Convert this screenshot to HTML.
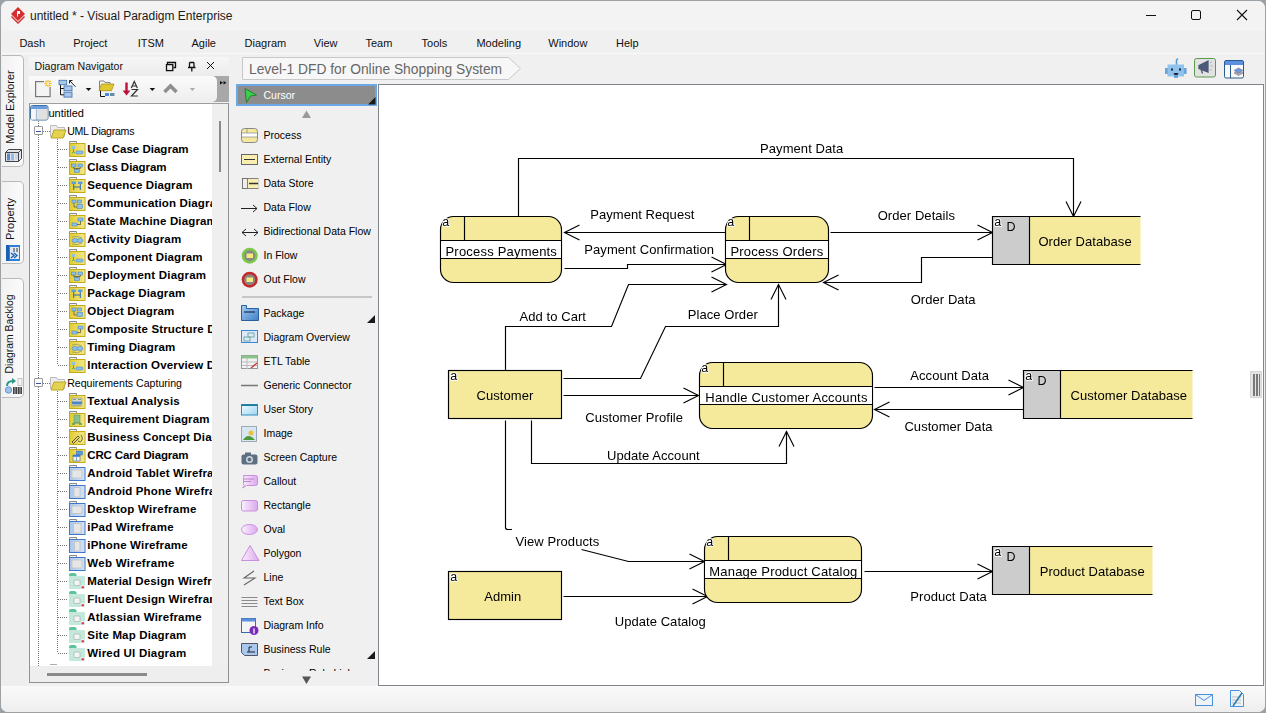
<!DOCTYPE html>
<html><head><meta charset="utf-8">
<style>
*{margin:0;padding:0;box-sizing:border-box}
html,body{width:1266px;height:713px;overflow:hidden;background:#f0f0f0;font-family:"Liberation Sans",sans-serif;color:#000}
.a{position:absolute}
.t{position:absolute;white-space:nowrap;line-height:1}
</style></head><body>

<div class="a" style="left:0;top:0;width:1266px;height:713px;background:#9ca1a6"></div>
<div class="a" style="left:1px;top:1px;width:1264px;height:711px;background:#f0f0f0;border-radius:7px 7px 7px 7px"></div>
<div class="a" style="left:1px;top:1px;width:1264px;height:30px;background:#f3f3f3;border-radius:7px 7px 0 0"></div>
<svg class="a" style="left:8px;top:5px" width="20" height="20" viewBox="0 0 20 20">
<path d="M10 2 L17 9 L10 16 L3 9 Z" fill="#d32f2f"/>
<path d="M4 11 L10 17 L16 11 L17 12 L10 19 L3 12 Z" fill="#d32f2f"/>
<path d="M9 6 h3 v3 h-2 v3 l-1 -1 z" fill="#f3f3f3"/>
</svg>
<div class="t" style="left:30px;top:10px;font-size:12px;color:#1a1a1a">untitled * - Visual Paradigm Enterprise</div>
<div class="a" style="left:1146px;top:15px;width:10px;height:1px;background:#111"></div>
<div class="a" style="left:1191px;top:10px;width:10px;height:10px;border:1px solid #111;border-radius:2px"></div>
<svg class="a" style="left:1236px;top:9px" width="12" height="12"><path d="M1 1 L11 11 M11 1 L1 11" stroke="#111" stroke-width="1.1"/></svg>
<div class="a" style="left:1px;top:53px;width:1264px;height:1px;background:#f8f8f8"></div>
<div class="t" style="left:19.4px;top:38px;font-size:11px;color:#111">Dash</div>
<div class="t" style="left:73.2px;top:38px;font-size:11px;color:#111">Project</div>
<div class="t" style="left:137.7px;top:38px;font-size:11px;color:#111">ITSM</div>
<div class="t" style="left:191.5px;top:38px;font-size:11px;color:#111">Agile</div>
<div class="t" style="left:244.6px;top:38px;font-size:11px;color:#111">Diagram</div>
<div class="t" style="left:313.8px;top:38px;font-size:11px;color:#111">View</div>
<div class="t" style="left:365.5px;top:38px;font-size:11px;color:#111">Team</div>
<div class="t" style="left:421.6px;top:38px;font-size:11px;color:#111">Tools</div>
<div class="t" style="left:476.4px;top:38px;font-size:11px;color:#111">Modeling</div>
<div class="t" style="left:548.3px;top:38px;font-size:11px;color:#111">Window</div>
<div class="t" style="left:616px;top:38px;font-size:11px;color:#111">Help</div>
<div class="a" style="left:1px;top:55px;width:27px;height:631px;background:#eeeeee"></div>
<div class="a" style="left:2px;top:55px;width:22px;height:112px;background:linear-gradient(90deg,#f2f2f2,#fbfbfb);border:1px solid #b9b9b9;border-left:none;border-radius:0 5px 5px 0"></div>
<div class="t" style="left:-38.7px;top:101.2px;width:100px;height:12px;font-size:10.9px;transform:rotate(-90deg);text-align:center;color:#111">Model Explorer</div>
<div class="a" style="left:2px;top:181px;width:22px;height:83px;background:linear-gradient(90deg,#f2f2f2,#fbfbfb);border:1px solid #b9b9b9;border-left:none;border-radius:0 5px 5px 0"></div>
<div class="t" style="left:-38.7px;top:213.2px;width:100px;height:12px;font-size:11.1px;transform:rotate(-90deg);text-align:center;color:#111">Property</div>
<div class="a" style="left:2px;top:278px;width:22px;height:120px;background:linear-gradient(90deg,#f2f2f2,#fbfbfb);border:1px solid #b9b9b9;border-left:none;border-radius:0 5px 5px 0"></div>
<div class="t" style="left:-38.7px;top:328.4px;width:100px;height:12px;font-size:10.4px;transform:rotate(-90deg);text-align:center;color:#111">Diagram Backlog</div>
<svg class="a" style="left:3px;top:147px" width="20" height="17">
<path d="M2.5 5.5 l3 -3 h13 v9 l-3 3 h-13z" fill="#e2e6ea" stroke="#444"/>
<path d="M2.5 5.5 h13 v9 M15.5 5.5 l3 -3" fill="none" stroke="#444"/>
<rect x="4" y="6.5" width="3" height="7" fill="#5a8ad0"/><rect x="8" y="6.5" width="3" height="7" fill="#9ab8e0"/><rect x="12" y="6.5" width="3" height="6" fill="#c8d8ec"/>
</svg>
<svg class="a" style="left:5px;top:244px" width="17" height="18">
<rect x="1" y="1" width="14" height="16" fill="#2f7fd8"/>
<rect x="1" y="1" width="3" height="16" fill="#1a5fb0"/>
<rect x="5" y="3" width="9" height="12" fill="#dfeaf7"/>
<path d="M9 4 v4 M12 4 v4" stroke="#555" stroke-width="1.2"/>
<path d="M6 9 l3 2.5 l-3 2.5 M9 9 l3 2.5 l-3 2.5" stroke="#1a5fb0" stroke-width="1.3" fill="none"/>
</svg>
<svg class="a" style="left:4px;top:377px" width="19" height="18">
<path d="M3 9 q0 -5 6 -5" stroke="#2a9a8a" stroke-width="2" fill="none"/><path d="M8 1 l4 3 l-4 3z" fill="#2a9a8a"/>
<circle cx="4.5" cy="13" r="3.2" fill="#9cc0e8" stroke="#5a88c0" stroke-width=".8"/>
<rect x="9" y="10" width="9" height="7" fill="#444"/>
<path d="M11 10 v7 M13.5 10 v7 M16 10 v7" stroke="#ddd" stroke-width=".7"/>
<rect x="14" y="1.5" width="4" height="7" fill="#f4f4f4" stroke="#bbb" stroke-width=".8"/>
</svg>
<div class="a" style="left:29px;top:57px;width:200px;height:19px;background:linear-gradient(#f6f6f6,#ececec)"></div>
<div class="t" style="left:34.6px;top:61px;font-size:10.6px;color:#111">Diagram Navigator</div>
<svg class="a" style="left:160px;top:57px" width="60" height="18">
<path d="M167.5 64.5 V62.5 H175.5 V67.5 H173.5" fill="none" stroke="#111" stroke-width="1.3" transform="translate(-160,-57)"/>
<rect x="6.5" y="7.6" width="6.3" height="6" fill="none" stroke="#111" stroke-width="1.3"/>
<path d="M29.5 5.5 V10 M34 5.5 V10 M29.5 5.5 H34 M28 10.5 H35.5 M31.8 10.5 V14.5" fill="none" stroke="#111" stroke-width="1.3"/>
<path d="M47 5 L54 12 M54 5 L47 12" stroke="#111" stroke-width="1"/>
</svg>
<div class="a" style="left:29px;top:76px;width:200px;height:26px;background:#a8a8a8"></div>
<div class="a" style="left:29px;top:76px;width:188px;height:26px;background:linear-gradient(#fbfbfb,#eeeeee);border-radius:0 5px 5px 0"></div>
<svg class="a" style="left:29px;top:76px" width="200" height="26">
<g transform="translate(-29,-76)">
<rect x="35.6" y="81.6" width="14.5" height="15" fill="#f4f4f4" stroke="#777" stroke-width="1.2"/>
<rect x="44" y="80" width="8" height="7" fill="#f4f4f4"/>
<path d="M48 80 v2.2 M48 84.8 v2.2 M44.5 83.5 h2.2 M49.3 83.5 h2.2 M45.5 81 l1.4 1.4 M50.5 81 l-1.4 1.4 M45.5 86 l1.4 -1.4 M50.5 86 l-1.4 -1.4" stroke="#f0b400" stroke-width="1.1"/>
<path d="M60.5 84.5 V94.8 H64 M60.5 88.5 H64" fill="none" stroke="#111" stroke-width="1"/>
<rect x="59" y="80.3" width="7.7" height="4.4" fill="#a9c7ea" stroke="#4a78b0" stroke-width=".9"/>
<rect x="64" y="86" width="8" height="4.7" fill="#a9c7ea" stroke="#4a78b0" stroke-width=".9"/>
<rect x="64" y="92.2" width="8" height="4.9" fill="#a9c7ea" stroke="#4a78b0" stroke-width=".9"/>
<path d="M75.5 86.8 L69.8 80.8 M69.5 80.5 h3 M69.5 80.5 v3" fill="none" stroke="#222" stroke-width="1"/>
<path d="M85.8 88 h5.5 l-2.75 3 z" fill="#111"/>
<path d="M99.5 90 V81 H104 l1 1.5 h5 V85" fill="none" stroke="#777" stroke-width=".9"/>
<path d="M99 90.7 L101.5 84 H114 L111.5 90.7 Z" fill="#e0c830" stroke="#a89418" stroke-width=".8"/>
<path d="M100.5 90.7 V96.5 H105" fill="none" stroke="#111" stroke-width="1"/>
<rect x="105" y="93" width="4" height="3" fill="#4a8ad8"/><rect x="110" y="93" width="4.5" height="3" fill="#6a8aa8"/>
<path d="M126.5 82.5 V93" stroke="#c0103a" stroke-width="2.4"/>
<path d="M122.6 90.5 L126.5 95.6 L130.4 90.5 Z" fill="#c0103a"/>
<path d="M131.3 88 L134.3 81.5 L137.3 88 M132.3 86 h4" fill="none" stroke="#333" stroke-width="1.2"/>
<path d="M131.5 89.5 H137.5 L131.5 96 H137.8" fill="none" stroke="#333" stroke-width="1.2"/>
<path d="M149.6 88 h5.5 l-2.75 3 z" fill="#111"/>
<path d="M164.5 92 L170.5 86 L176.5 92" fill="none" stroke="#8f8f8f" stroke-width="3.6"/>
<path d="M189.8 88 h5.2 l-2.6 3 z" fill="#aaa"/>
<path d="M220 81 l3 1.7 l-3 1.7 z M223.5 81 l3 1.7 l-3 1.7 z" fill="#111"/>
</g>
</svg>
<div class="a" style="left:29px;top:103px;width:200px;height:580px;border:1px solid #8d9196;border-top-color:#9a9ea3;background:#eeeeee"></div>
<div class="a" style="left:30px;top:104px;width:182px;height:562px;background:#fff"></div>
<div class="a" style="left:212px;top:104px;width:16px;height:562px;background:#efefef"></div>
<div class="a" style="left:218.5px;top:121px;width:2.5px;height:51px;background:#8a8a8a"></div>
<div class="a" style="left:47px;top:673px;width:100px;height:2.5px;background:#8a8a8a"></div>
<svg width="0" height="0" style="position:absolute"><defs><linearGradient id="yg" x1="0" x2="1"><stop offset="0" stop-color="#e2cc2e"/><stop offset="1" stop-color="#f3e88e"/></linearGradient><linearGradient id="pkg" x1="0" y1="0" x2="1" y2="1"><stop offset="0" stop-color="#a8cdf0"/><stop offset="1" stop-color="#3f7fc8"/></linearGradient><linearGradient id="pur" x1="0" x2="1"><stop offset="0" stop-color="#fbf0fe"/><stop offset="1" stop-color="#dca8ee"/></linearGradient><linearGradient id="us" x1="0" y1="0" x2="1" y2="1"><stop offset="0" stop-color="#f2fbff"/><stop offset="1" stop-color="#9fd4f0"/></linearGradient><linearGradient id="bg" x1="0" x2="1"><stop offset="0" stop-color="#a9c6ee"/><stop offset="1" stop-color="#d6e4f6"/></linearGradient></defs></svg>
<div class="a" style="left:30px;top:104px;width:182px;height:562px;overflow:hidden">
<div class="a" style="left:8px;top:17px;width:1px;height:545px;background:repeating-linear-gradient(#777 0 1px,transparent 1px 2px)"></div>
<div class="a" style="left:20px;top:560px;width:7px;height:1px;background:#aaa"></div>
<div class="a" style="left:27px;top:35px;width:1px;height:226px;background:repeating-linear-gradient(#777 0 1px,transparent 1px 2px)"></div>
<div class="a" style="left:27px;top:287px;width:1px;height:262px;background:repeating-linear-gradient(#777 0 1px,transparent 1px 2px)"></div>
<svg class="a" style="left:0px;top:1px" width="19" height="16"><rect x="0.5" y="0.5" width="17.5" height="14.5" rx="2" fill="#ececec" stroke="#3f6f9a"/><path d="M1 3 Q1 1 3 1 H15.5 Q17.5 1 17.5 3 V4 H1Z" fill="#6a9ee0"/><rect x="1" y="4" width="6" height="10.5" fill="#f7f7f7"/><path d="M6.5 4 v11" stroke="#9cbcd8" stroke-width="1.2"/><rect x="8" y="4" width="9.5" height="10.5" fill="#e0e0e0"/></svg>
<div class="t" style="left:18.5px;top:3.5px;font-size:11px">untitled</div>
<div class="a" style="left:4px;top:22.0px;width:9px;height:9px;border:1px solid #999;background:#fff;border-radius:1px"></div>
<div class="a" style="left:6px;top:26.5px;width:5px;height:1px;background:#3355aa"></div>
<div class="a" style="left:13px;top:26.5px;width:7px;height:1px;background:repeating-linear-gradient(90deg,#777 0 1px,transparent 1px 2px)"></div>
<svg class="a" style="left:20px;top:19.5px" width="17" height="15"><path d="M0.5 1.5 h6 l1 2 h7 v9 h-14z" fill="#ededed" stroke="#bbb"/><path d="M1 14 l3 -8 h12 l-3 8 z" fill="#e4d34e" stroke="#b8a528"/></svg>
<div class="t" style="left:37.2px;top:22.0px;font-size:10.6px;color:#000;letter-spacing:-0.27px">UML Diagrams</div>
<div class="a" style="left:28px;top:45.0px;width:10px;height:1px;background:repeating-linear-gradient(90deg,#777 0 1px,transparent 1px 2px)"></div>
<svg class="a" style="left:39px;top:36.5px" width="17" height="16"><path d="M0.5 3 V0.5 H7.5 V2.5" fill="#f0f0f0" stroke="#8a8a8a"/><rect x="0.5" y="2.5" width="15.5" height="13" fill="url(#yg)" stroke="#c4ab1c"/><rect x="3" y="5" width="3" height="3" fill="#8ec0ea"/><path d="M4.5 8 v3 M3 12 l1.5 -1 l1.5 1" stroke="#3a9a70" stroke-width=".8" fill="none"/><rect x="7" y="10" width="7" height="3" rx="1" fill="#8ec0ea" stroke="#3a7ac0" stroke-width=".5"/></svg>
<div class="t" style="left:57.3px;top:40.0px;font-size:11.5px;font-weight:bold;letter-spacing:0.015px">Use Case Diagram</div>
<div class="a" style="left:28px;top:63.0px;width:10px;height:1px;background:repeating-linear-gradient(90deg,#777 0 1px,transparent 1px 2px)"></div>
<svg class="a" style="left:39px;top:54.5px" width="17" height="16"><path d="M0.5 3 V0.5 H7.5 V2.5" fill="#f0f0f0" stroke="#8a8a8a"/><rect x="0.5" y="2.5" width="15.5" height="13" fill="url(#yg)" stroke="#c4ab1c"/><rect x="2.5" y="5" width="4.5" height="3" fill="#8ec0ea" stroke="#3a7ac0" stroke-width=".5"/><rect x="9" y="5" width="4.5" height="3" fill="#8ec0ea" stroke="#3a7ac0" stroke-width=".5"/><rect x="5.5" y="10.5" width="5" height="3" fill="#8ec0ea" stroke="#3a7ac0" stroke-width=".5"/><path d="M4.7 8 v1.5 h6.6 V8 M8 9.5 v1" stroke="#333" stroke-width=".6" fill="none"/></svg>
<div class="t" style="left:57.3px;top:58.0px;font-size:11.5px;font-weight:bold;letter-spacing:-0.051px">Class Diagram</div>
<div class="a" style="left:28px;top:81.0px;width:10px;height:1px;background:repeating-linear-gradient(90deg,#777 0 1px,transparent 1px 2px)"></div>
<svg class="a" style="left:39px;top:72.5px" width="17" height="16"><path d="M0.5 3 V0.5 H7.5 V2.5" fill="#f0f0f0" stroke="#8a8a8a"/><rect x="0.5" y="2.5" width="15.5" height="13" fill="url(#yg)" stroke="#c4ab1c"/><rect x="2.5" y="4.5" width="4.5" height="2.5" fill="#5aa0e0"/><rect x="9" y="4.5" width="4.5" height="2.5" fill="#5aa0e0"/><path d="M4.7 7 v6 M11.3 7 v6 M4.7 10 h6.6" stroke="#2a6ab0" stroke-width="1" fill="none"/></svg>
<div class="t" style="left:57.3px;top:76.0px;font-size:11.5px;font-weight:bold;letter-spacing:0.105px">Sequence Diagram</div>
<div class="a" style="left:28px;top:99.0px;width:10px;height:1px;background:repeating-linear-gradient(90deg,#777 0 1px,transparent 1px 2px)"></div>
<svg class="a" style="left:39px;top:90.5px" width="17" height="16"><path d="M0.5 3 V0.5 H7.5 V2.5" fill="#f0f0f0" stroke="#8a8a8a"/><rect x="0.5" y="2.5" width="15.5" height="13" fill="url(#yg)" stroke="#c4ab1c"/><rect x="3" y="5" width="4" height="3" fill="#8ec0ea" stroke="#3a7ac0" stroke-width=".5"/><rect x="8.5" y="5" width="4" height="3" fill="#8ec0ea" stroke="#3a7ac0" stroke-width=".5"/><rect x="8" y="9.5" width="5.5" height="4" fill="#8ec0ea" stroke="#3a7ac0" stroke-width=".5"/><path d="M5 8 v4 h3" stroke="#333" stroke-width=".6" fill="none"/></svg>
<div class="t" style="left:57.3px;top:94.0px;font-size:11.5px;font-weight:bold;letter-spacing:0.15px">Communication Diagram</div>
<div class="a" style="left:28px;top:117.0px;width:10px;height:1px;background:repeating-linear-gradient(90deg,#777 0 1px,transparent 1px 2px)"></div>
<svg class="a" style="left:39px;top:108.5px" width="17" height="16"><path d="M0.5 3 V0.5 H7.5 V2.5" fill="#f0f0f0" stroke="#8a8a8a"/><rect x="0.5" y="2.5" width="15.5" height="13" fill="url(#yg)" stroke="#c4ab1c"/><rect x="9" y="5" width="5" height="3" fill="#8ec0ea" stroke="#3a7ac0" stroke-width=".5"/><rect x="3" y="10" width="5" height="3" fill="#8ec0ea" stroke="#3a7ac0" stroke-width=".5"/><path d="M11.5 8 v3.5 h-3.5" stroke="#333" stroke-width=".6" fill="none"/></svg>
<div class="t" style="left:57.3px;top:112.0px;font-size:11.5px;font-weight:bold;letter-spacing:0.15px">State Machine Diagram</div>
<div class="a" style="left:28px;top:135.0px;width:10px;height:1px;background:repeating-linear-gradient(90deg,#777 0 1px,transparent 1px 2px)"></div>
<svg class="a" style="left:39px;top:126.5px" width="17" height="16"><path d="M0.5 3 V0.5 H7.5 V2.5" fill="#f0f0f0" stroke="#8a8a8a"/><rect x="0.5" y="2.5" width="15.5" height="13" fill="url(#yg)" stroke="#c4ab1c"/><ellipse cx="6" cy="9.5" rx="3" ry="2" fill="#8ec0ea" stroke="#3a7ac0" stroke-width=".5"/><ellipse cx="11" cy="9.5" rx="3" ry="2" fill="#8ec0ea" stroke="#3a7ac0" stroke-width=".5"/><path d="M3 6 q5 -2 10 1 M3 13 q5 2 10 -1" stroke="#777" stroke-width=".5" fill="none"/></svg>
<div class="t" style="left:57.3px;top:130.0px;font-size:11.5px;font-weight:bold;letter-spacing:0.206px">Activity Diagram</div>
<div class="a" style="left:28px;top:153.0px;width:10px;height:1px;background:repeating-linear-gradient(90deg,#777 0 1px,transparent 1px 2px)"></div>
<svg class="a" style="left:39px;top:144.5px" width="17" height="16"><path d="M0.5 3 V0.5 H7.5 V2.5" fill="#f0f0f0" stroke="#8a8a8a"/><rect x="0.5" y="2.5" width="15.5" height="13" fill="url(#yg)" stroke="#c4ab1c"/><rect x="3" y="5" width="3" height="3" fill="#8ec0ea"/><path d="M4.5 8 v3 M3 12 l1.5 -1 l1.5 1" stroke="#3a9a70" stroke-width=".8" fill="none"/><rect x="7" y="10" width="7" height="3" rx="1" fill="#8ec0ea" stroke="#3a7ac0" stroke-width=".5"/></svg>
<div class="t" style="left:57.3px;top:148.0px;font-size:11.5px;font-weight:bold;letter-spacing:0.136px">Component Diagram</div>
<div class="a" style="left:28px;top:171.0px;width:10px;height:1px;background:repeating-linear-gradient(90deg,#777 0 1px,transparent 1px 2px)"></div>
<svg class="a" style="left:39px;top:162.5px" width="17" height="16"><path d="M0.5 3 V0.5 H7.5 V2.5" fill="#f0f0f0" stroke="#8a8a8a"/><rect x="0.5" y="2.5" width="15.5" height="13" fill="url(#yg)" stroke="#c4ab1c"/><rect x="2.5" y="5" width="4.5" height="3" fill="#8ec0ea" stroke="#3a7ac0" stroke-width=".5"/><rect x="9" y="5" width="4.5" height="3" fill="#8ec0ea" stroke="#3a7ac0" stroke-width=".5"/><rect x="5.5" y="10.5" width="5" height="3" fill="#8ec0ea" stroke="#3a7ac0" stroke-width=".5"/><path d="M4.7 8 v1.5 h6.6 V8 M8 9.5 v1" stroke="#333" stroke-width=".6" fill="none"/></svg>
<div class="t" style="left:57.3px;top:166.0px;font-size:11.5px;font-weight:bold;letter-spacing:0.222px">Deployment Diagram</div>
<div class="a" style="left:28px;top:189.0px;width:10px;height:1px;background:repeating-linear-gradient(90deg,#777 0 1px,transparent 1px 2px)"></div>
<svg class="a" style="left:39px;top:180.5px" width="17" height="16"><path d="M0.5 3 V0.5 H7.5 V2.5" fill="#f0f0f0" stroke="#8a8a8a"/><rect x="0.5" y="2.5" width="15.5" height="13" fill="url(#yg)" stroke="#c4ab1c"/><rect x="2.5" y="4.5" width="4.5" height="2.5" fill="#5aa0e0"/><rect x="9" y="4.5" width="4.5" height="2.5" fill="#5aa0e0"/><path d="M4.7 7 v6 M11.3 7 v6 M4.7 10 h6.6" stroke="#2a6ab0" stroke-width="1" fill="none"/></svg>
<div class="t" style="left:57.3px;top:184.0px;font-size:11.5px;font-weight:bold;letter-spacing:0.144px">Package Diagram</div>
<div class="a" style="left:28px;top:207.0px;width:10px;height:1px;background:repeating-linear-gradient(90deg,#777 0 1px,transparent 1px 2px)"></div>
<svg class="a" style="left:39px;top:198.5px" width="17" height="16"><path d="M0.5 3 V0.5 H7.5 V2.5" fill="#f0f0f0" stroke="#8a8a8a"/><rect x="0.5" y="2.5" width="15.5" height="13" fill="url(#yg)" stroke="#c4ab1c"/><rect x="3" y="5" width="4" height="3" fill="#8ec0ea" stroke="#3a7ac0" stroke-width=".5"/><rect x="8.5" y="5" width="4" height="3" fill="#8ec0ea" stroke="#3a7ac0" stroke-width=".5"/><rect x="8" y="9.5" width="5.5" height="4" fill="#8ec0ea" stroke="#3a7ac0" stroke-width=".5"/><path d="M5 8 v4 h3" stroke="#333" stroke-width=".6" fill="none"/></svg>
<div class="t" style="left:57.3px;top:202.0px;font-size:11.5px;font-weight:bold;letter-spacing:0.153px">Object Diagram</div>
<div class="a" style="left:28px;top:225.0px;width:10px;height:1px;background:repeating-linear-gradient(90deg,#777 0 1px,transparent 1px 2px)"></div>
<svg class="a" style="left:39px;top:216.5px" width="17" height="16"><path d="M0.5 3 V0.5 H7.5 V2.5" fill="#f0f0f0" stroke="#8a8a8a"/><rect x="0.5" y="2.5" width="15.5" height="13" fill="url(#yg)" stroke="#c4ab1c"/><rect x="9" y="5" width="5" height="3" fill="#8ec0ea" stroke="#3a7ac0" stroke-width=".5"/><rect x="3" y="10" width="5" height="3" fill="#8ec0ea" stroke="#3a7ac0" stroke-width=".5"/><path d="M11.5 8 v3.5 h-3.5" stroke="#333" stroke-width=".6" fill="none"/></svg>
<div class="t" style="left:57.3px;top:220.0px;font-size:11.5px;font-weight:bold;letter-spacing:0.15px">Composite Structure Diagram</div>
<div class="a" style="left:28px;top:243.0px;width:10px;height:1px;background:repeating-linear-gradient(90deg,#777 0 1px,transparent 1px 2px)"></div>
<svg class="a" style="left:39px;top:234.5px" width="17" height="16"><path d="M0.5 3 V0.5 H7.5 V2.5" fill="#f0f0f0" stroke="#8a8a8a"/><rect x="0.5" y="2.5" width="15.5" height="13" fill="url(#yg)" stroke="#c4ab1c"/><ellipse cx="6" cy="9.5" rx="3" ry="2" fill="#8ec0ea" stroke="#3a7ac0" stroke-width=".5"/><ellipse cx="11" cy="9.5" rx="3" ry="2" fill="#8ec0ea" stroke="#3a7ac0" stroke-width=".5"/><path d="M3 6 q5 -2 10 1 M3 13 q5 2 10 -1" stroke="#777" stroke-width=".5" fill="none"/></svg>
<div class="t" style="left:57.3px;top:238.0px;font-size:11.5px;font-weight:bold;letter-spacing:0.095px">Timing Diagram</div>
<div class="a" style="left:28px;top:261.0px;width:10px;height:1px;background:repeating-linear-gradient(90deg,#777 0 1px,transparent 1px 2px)"></div>
<svg class="a" style="left:39px;top:252.5px" width="17" height="16"><path d="M0.5 3 V0.5 H7.5 V2.5" fill="#f0f0f0" stroke="#8a8a8a"/><rect x="0.5" y="2.5" width="15.5" height="13" fill="url(#yg)" stroke="#c4ab1c"/><rect x="3" y="5" width="3" height="3" fill="#8ec0ea"/><path d="M4.5 8 v3 M3 12 l1.5 -1 l1.5 1" stroke="#3a9a70" stroke-width=".8" fill="none"/><rect x="7" y="10" width="7" height="3" rx="1" fill="#8ec0ea" stroke="#3a7ac0" stroke-width=".5"/></svg>
<div class="t" style="left:57.3px;top:256.0px;font-size:11.5px;font-weight:bold;letter-spacing:0.15px">Interaction Overview Diagram</div>
<div class="a" style="left:4px;top:274.0px;width:9px;height:9px;border:1px solid #999;background:#fff;border-radius:1px"></div>
<div class="a" style="left:6px;top:278.5px;width:5px;height:1px;background:#3355aa"></div>
<div class="a" style="left:13px;top:278.5px;width:7px;height:1px;background:repeating-linear-gradient(90deg,#777 0 1px,transparent 1px 2px)"></div>
<svg class="a" style="left:20px;top:271.5px" width="17" height="15"><path d="M0.5 1.5 h6 l1 2 h7 v9 h-14z" fill="#ededed" stroke="#bbb"/><path d="M1 14 l3 -8 h12 l-3 8 z" fill="#e4d34e" stroke="#b8a528"/></svg>
<div class="t" style="left:37.2px;top:274.0px;font-size:10.6px;color:#000;letter-spacing:0px">Requirements Capturing</div>
<div class="a" style="left:28px;top:297.0px;width:10px;height:1px;background:repeating-linear-gradient(90deg,#777 0 1px,transparent 1px 2px)"></div>
<svg class="a" style="left:39px;top:288.5px" width="17" height="16"><path d="M0.5 3 V0.5 H7.5 V2.5" fill="#f0f0f0" stroke="#8a8a8a"/><rect x="0.5" y="2.5" width="15.5" height="13" fill="url(#yg)" stroke="#c4ab1c"/><rect x="3" y="5" width="10" height="8" fill="#d8d8c8" stroke="#888" stroke-width=".5"/><rect x="3" y="8.5" width="10" height="2.5" fill="#4a86d0"/><path d="M4 6.5 h3 M9 6.5 h3 M4 12 h8" stroke="#6a8a6a" stroke-width=".8"/></svg>
<div class="t" style="left:57.3px;top:292.0px;font-size:11.5px;font-weight:bold;letter-spacing:0.198px">Textual Analysis</div>
<div class="a" style="left:28px;top:315.0px;width:10px;height:1px;background:repeating-linear-gradient(90deg,#777 0 1px,transparent 1px 2px)"></div>
<svg class="a" style="left:39px;top:306.5px" width="17" height="16"><path d="M0.5 3 V0.5 H7.5 V2.5" fill="#f0f0f0" stroke="#8a8a8a"/><rect x="0.5" y="2.5" width="15.5" height="13" fill="url(#yg)" stroke="#c4ab1c"/><rect x="5" y="4" width="6" height="8" fill="#8ac08a" stroke="#5a905a" stroke-width=".5"/><rect x="3" y="12" width="3" height="2" fill="#6ab06a"/><rect x="10" y="12" width="3" height="2" fill="#6ab06a"/><path d="M8 12 v-0 M4.5 12 h7" stroke="#5a905a" stroke-width=".6"/></svg>
<div class="t" style="left:57.3px;top:310.0px;font-size:11.5px;font-weight:bold;letter-spacing:0.15px">Requirement Diagram</div>
<div class="a" style="left:28px;top:333.0px;width:10px;height:1px;background:repeating-linear-gradient(90deg,#777 0 1px,transparent 1px 2px)"></div>
<svg class="a" style="left:39px;top:324.5px" width="17" height="16"><path d="M0.5 3 V0.5 H7.5 V2.5" fill="#f0f0f0" stroke="#8a8a8a"/><rect x="0.5" y="2.5" width="15.5" height="13" fill="url(#yg)" stroke="#c4ab1c"/><path d="M3 13 l6 -6 l1.5 1.5 l-6 6z" fill="none" stroke="#333" stroke-width=".8"/><path d="M9 12 q3 2 4 -1 q1 -3 -1 -5" fill="none" stroke="#333" stroke-width=".7"/></svg>
<div class="t" style="left:57.3px;top:328.0px;font-size:11.5px;font-weight:bold;letter-spacing:0.15px">Business Concept Diagram</div>
<div class="a" style="left:28px;top:351.0px;width:10px;height:1px;background:repeating-linear-gradient(90deg,#777 0 1px,transparent 1px 2px)"></div>
<svg class="a" style="left:39px;top:342.5px" width="17" height="16"><path d="M0.5 3 V0.5 H7.5 V2.5" fill="#f0f0f0" stroke="#8a8a8a"/><rect x="0.5" y="2.5" width="15.5" height="13" fill="url(#yg)" stroke="#c4ab1c"/><rect x="7.5" y="4" width="6" height="4" fill="#5a9ae0" stroke="#3a6ab0" stroke-width=".5"/><rect x="4" y="8" width="7" height="6" fill="#f4f4f4" stroke="#3a6ab0" stroke-width=".6"/><rect x="4" y="8" width="7" height="1.8" fill="#3a7ad0"/><path d="M7.5 10 v4" stroke="#3a6ab0" stroke-width=".6"/></svg>
<div class="t" style="left:57.3px;top:346.0px;font-size:11.5px;font-weight:bold;letter-spacing:-0.151px">CRC Card Diagram</div>
<div class="a" style="left:28px;top:369.0px;width:10px;height:1px;background:repeating-linear-gradient(90deg,#777 0 1px,transparent 1px 2px)"></div>
<svg class="a" style="left:39px;top:360.5px" width="17" height="16"><path d="M0.5 3 V0.5 H7.5 V2.5" fill="#f0f0f0" stroke="#8a8a8a"/><rect x="0.5" y="2.5" width="15.5" height="13" fill="url(#bg)" stroke="#3f78c8"/><rect x="3" y="5" width="10" height="8" fill="#e6e6e6" stroke="#bdbdbd" stroke-width=".7"/></svg>
<div class="t" style="left:57.3px;top:364.0px;font-size:11.5px;font-weight:bold;letter-spacing:0.15px">Android Tablet Wireframe</div>
<div class="a" style="left:28px;top:387.0px;width:10px;height:1px;background:repeating-linear-gradient(90deg,#777 0 1px,transparent 1px 2px)"></div>
<svg class="a" style="left:39px;top:378.5px" width="17" height="16"><path d="M0.5 3 V0.5 H7.5 V2.5" fill="#f0f0f0" stroke="#8a8a8a"/><rect x="0.5" y="2.5" width="15.5" height="13" fill="url(#bg)" stroke="#3f78c8"/><rect x="5" y="4.5" width="6" height="9.5" fill="#e6e6e6" stroke="#bdbdbd" stroke-width=".7"/></svg>
<div class="t" style="left:57.3px;top:382.0px;font-size:11.5px;font-weight:bold;letter-spacing:0.15px">Android Phone Wireframe</div>
<div class="a" style="left:28px;top:405.0px;width:10px;height:1px;background:repeating-linear-gradient(90deg,#777 0 1px,transparent 1px 2px)"></div>
<svg class="a" style="left:39px;top:396.5px" width="17" height="16"><path d="M0.5 3 V0.5 H7.5 V2.5" fill="#f0f0f0" stroke="#8a8a8a"/><rect x="0.5" y="2.5" width="15.5" height="13" fill="url(#bg)" stroke="#3f78c8"/><rect x="3" y="5" width="10" height="7.5" fill="#e6e6e6" stroke="#bdbdbd" stroke-width=".7"/></svg>
<div class="t" style="left:57.3px;top:400.0px;font-size:11.5px;font-weight:bold;letter-spacing:0.272px">Desktop Wireframe</div>
<div class="a" style="left:28px;top:423.0px;width:10px;height:1px;background:repeating-linear-gradient(90deg,#777 0 1px,transparent 1px 2px)"></div>
<svg class="a" style="left:39px;top:414.5px" width="17" height="16"><path d="M0.5 3 V0.5 H7.5 V2.5" fill="#f0f0f0" stroke="#8a8a8a"/><rect x="0.5" y="2.5" width="15.5" height="13" fill="url(#bg)" stroke="#3f78c8"/><rect x="4.5" y="4.5" width="7.5" height="9.5" fill="#e6e6e6" stroke="#bdbdbd" stroke-width=".7"/></svg>
<div class="t" style="left:57.3px;top:418.0px;font-size:11.5px;font-weight:bold;letter-spacing:0.202px">iPad Wireframe</div>
<div class="a" style="left:28px;top:441.0px;width:10px;height:1px;background:repeating-linear-gradient(90deg,#777 0 1px,transparent 1px 2px)"></div>
<svg class="a" style="left:39px;top:432.5px" width="17" height="16"><path d="M0.5 3 V0.5 H7.5 V2.5" fill="#f0f0f0" stroke="#8a8a8a"/><rect x="0.5" y="2.5" width="15.5" height="13" fill="url(#bg)" stroke="#3f78c8"/><rect x="5.5" y="4.5" width="5.5" height="9.5" fill="#e6e6e6" stroke="#bdbdbd" stroke-width=".7"/></svg>
<div class="t" style="left:57.3px;top:436.0px;font-size:11.5px;font-weight:bold;letter-spacing:0.179px">iPhone Wireframe</div>
<div class="a" style="left:28px;top:459.0px;width:10px;height:1px;background:repeating-linear-gradient(90deg,#777 0 1px,transparent 1px 2px)"></div>
<svg class="a" style="left:39px;top:450.5px" width="17" height="16"><path d="M0.5 3 V0.5 H7.5 V2.5" fill="#f0f0f0" stroke="#8a8a8a"/><rect x="0.5" y="2.5" width="15.5" height="13" fill="url(#bg)" stroke="#3f78c8"/><rect x="3" y="5" width="10" height="8" fill="#e6e6e6" stroke="#bdbdbd" stroke-width=".7"/></svg>
<div class="t" style="left:57.3px;top:454.0px;font-size:11.5px;font-weight:bold;letter-spacing:0.31px">Web Wireframe</div>
<div class="a" style="left:28px;top:477.0px;width:10px;height:1px;background:repeating-linear-gradient(90deg,#777 0 1px,transparent 1px 2px)"></div>
<svg class="a" style="left:39px;top:468.5px" width="17" height="17"><path d="M0 2 Q0 0 2 0 H6 L7.5 1.5 V3 H0Z" fill="#5cc39a"/><path d="M0 3 H15 Q16 3 16 4 V15 Q16 16 15 16 H1 Q0 16 0 15Z" fill="#c4e8da"/><rect x="5" y="7" width="6" height="5.5" rx="1" fill="#f4f4f4" stroke="#9aa" stroke-width=".6"/><circle cx="13.8" cy="14" r="2.3" fill="#e8f0f8"/><circle cx="13.8" cy="14.2" r="1.3" fill="#e0404e"/></svg>
<div class="t" style="left:57.3px;top:472.0px;font-size:11.5px;font-weight:bold;letter-spacing:0.15px">Material Design Wireframe</div>
<div class="a" style="left:28px;top:495.0px;width:10px;height:1px;background:repeating-linear-gradient(90deg,#777 0 1px,transparent 1px 2px)"></div>
<svg class="a" style="left:39px;top:486.5px" width="17" height="17"><path d="M0 2 Q0 0 2 0 H6 L7.5 1.5 V3 H0Z" fill="#5cc39a"/><path d="M0 3 H15 Q16 3 16 4 V15 Q16 16 15 16 H1 Q0 16 0 15Z" fill="#c4e8da"/><rect x="5" y="7" width="6" height="5.5" rx="1" fill="#f4f4f4" stroke="#9aa" stroke-width=".6"/><circle cx="13.8" cy="14" r="2.3" fill="#e8f0f8"/><circle cx="13.8" cy="14.2" r="1.3" fill="#e0404e"/></svg>
<div class="t" style="left:57.3px;top:490.0px;font-size:11.5px;font-weight:bold;letter-spacing:0.15px">Fluent Design Wireframe</div>
<div class="a" style="left:28px;top:513.0px;width:10px;height:1px;background:repeating-linear-gradient(90deg,#777 0 1px,transparent 1px 2px)"></div>
<svg class="a" style="left:39px;top:504.5px" width="17" height="17"><path d="M0 2 Q0 0 2 0 H6 L7.5 1.5 V3 H0Z" fill="#5cc39a"/><path d="M0 3 H15 Q16 3 16 4 V15 Q16 16 15 16 H1 Q0 16 0 15Z" fill="#c4e8da"/><rect x="5" y="7" width="6" height="5.5" rx="1" fill="#f4f4f4" stroke="#9aa" stroke-width=".6"/><circle cx="13.8" cy="14" r="2.3" fill="#e8f0f8"/><circle cx="13.8" cy="14.2" r="1.3" fill="#e0404e"/></svg>
<div class="t" style="left:57.3px;top:508.0px;font-size:11.5px;font-weight:bold;letter-spacing:0.21px">Atlassian Wireframe</div>
<div class="a" style="left:28px;top:531.0px;width:10px;height:1px;background:repeating-linear-gradient(90deg,#777 0 1px,transparent 1px 2px)"></div>
<svg class="a" style="left:39px;top:522.5px" width="17" height="17"><path d="M0 2 Q0 0 2 0 H6 L7.5 1.5 V3 H0Z" fill="#5cc39a"/><path d="M0 3 H15 Q16 3 16 4 V15 Q16 16 15 16 H1 Q0 16 0 15Z" fill="#c4e8da"/><rect x="5" y="7" width="6" height="5.5" rx="1" fill="#f4f4f4" stroke="#9aa" stroke-width=".6"/><circle cx="13.8" cy="14" r="2.3" fill="#e8f0f8"/><circle cx="13.8" cy="14.2" r="1.3" fill="#e0404e"/></svg>
<div class="t" style="left:57.3px;top:526.0px;font-size:11.5px;font-weight:bold;letter-spacing:0.159px">Site Map Diagram</div>
<div class="a" style="left:28px;top:549.0px;width:10px;height:1px;background:repeating-linear-gradient(90deg,#777 0 1px,transparent 1px 2px)"></div>
<svg class="a" style="left:39px;top:540.5px" width="17" height="17"><path d="M0 2 Q0 0 2 0 H6 L7.5 1.5 V3 H0Z" fill="#5cc39a"/><path d="M0 3 H15 Q16 3 16 4 V15 Q16 16 15 16 H1 Q0 16 0 15Z" fill="#c4e8da"/><rect x="5" y="7" width="6" height="5.5" rx="1" fill="#f4f4f4" stroke="#9aa" stroke-width=".6"/><circle cx="13.8" cy="14" r="2.3" fill="#e8f0f8"/><circle cx="13.8" cy="14.2" r="1.3" fill="#e0404e"/></svg>
<div class="t" style="left:57.3px;top:544.0px;font-size:11.5px;font-weight:bold;letter-spacing:0.205px">Wired UI Diagram</div>
</div>
<svg class="a" style="left:240px;top:56px" width="284" height="25">
<path d="M2.5 1.5 H268.5 L280.5 12.5 L268.5 23.5 H2.5 Z" fill="#f7f7f7" stroke="#c8c8c8"/>
</svg>
<div class="t" style="left:249px;top:63px;font-size:13.8px;color:#666">Level-1 DFD for Online Shopping System</div>
<svg class="a" style="left:1160px;top:56px" width="90" height="28">
<path d="M16.5 9 V4 l1.5 -1.5" stroke="#5b9bd5" stroke-width="1.6" fill="none"/>
<rect x="7.5" y="8.5" width="16.5" height="12" fill="#8fc3ee"/>
<rect x="14" y="19" width="4" height="3" fill="#6aa4d8"/>
<rect x="5" y="12" width="2.8" height="6" fill="#6aa4d8"/><rect x="23.8" y="12" width="2.8" height="6" fill="#6aa4d8"/>
<rect x="11" y="12.5" width="2" height="2" fill="#223"/><rect x="19" y="12.5" width="2" height="2" fill="#223"/>
<path d="M13.5 17 h5 l-1 2 h-3z" fill="#223"/>
<rect x="34.5" y="2.5" width="21" height="18.5" rx="2" fill="#e2e2e2" stroke="#5a9a4a"/>
<path d="M39 9.5 l9 -4.5 v11 l-9 -3.5z M41 13 l1.5 4.5" fill="#4a5a78" stroke="#4a5a78" stroke-width="1.3"/>
<path d="M50 7 l2 -1.5 M50.5 10 h2.5 M50 13 l2 1.5" stroke="#aaa" stroke-width=".8"/>
<rect x="64.5" y="4.5" width="19" height="17.5" rx="1.5" fill="#fafafa" stroke="#2a5a8a"/>
<rect x="65" y="5" width="18" height="4" fill="#5b8fe0"/>
<path d="M70.5 9 v13" stroke="#2a5a8a"/>
<path d="M74 17 l4.5 -2.5 l4.5 2.5 l-4.5 2.5z" fill="#aab" stroke="#777" stroke-width=".6"/>
<path d="M74 14.5 l4.5 -2.5 l4.5 2.5 l-4.5 2.5z" fill="#6a9ae8" stroke="#777" stroke-width=".6"/>
</svg>
<div class="a" style="left:235px;top:84px;width:143px;height:602px;background:#f0f0f0;overflow:hidden">
</div>
<div class="a" style="left:236px;top:84px;width:141px;height:22px;background:#8c8c8c;border:2px solid #6aa8e8"></div>
<svg class="a" style="left:243px;top:87px" width="14" height="16"><path d="M2 1.5 L13.5 8 L7.5 9 L3.5 15.5 Z" fill="#3ccf4e" stroke="#1d7a2a" stroke-width=".9"/></svg>
<svg class="a" style="left:368px;top:97px" width="8" height="8"><path d="M7.5 0 V7.5 H0 Z" fill="#1a1a1a"/></svg>
<div class="t" style="left:263.5px;top:90px;font-size:10.5px;color:#fff">Cursor</div>
<svg class="a" style="left:301px;top:110px" width="11" height="9"><path d="M5.5 0.5 L10 8 H1 Z" fill="#9a9a9a"/></svg>
<div class="a" style="left:235px;top:106px;width:143px;height:565px;overflow:hidden">
<div class="t" style="left:28.5px;top:24.099999999999994px;font-size:10.5px;color:#000">Process</div>
<div class="t" style="left:28.5px;top:48.099999999999994px;font-size:10.5px;color:#000">External Entity</div>
<div class="t" style="left:28.5px;top:72.1px;font-size:10.5px;color:#000">Data Store</div>
<div class="t" style="left:28.5px;top:96.1px;font-size:10.5px;color:#000">Data Flow</div>
<div class="t" style="left:28.5px;top:120.1px;font-size:10.5px;color:#000">Bidirectional Data Flow</div>
<div class="t" style="left:28.5px;top:144.10000000000002px;font-size:10.5px;color:#000">In Flow</div>
<div class="t" style="left:28.5px;top:168.10000000000002px;font-size:10.5px;color:#000">Out Flow</div>
<div class="a" style="left:7px;top:189.5px;width:130px;height:2px;background:#c6c6c6"></div>
<div class="t" style="left:28.5px;top:202.10000000000002px;font-size:10.5px;color:#000">Package</div>
<div class="t" style="left:28.5px;top:226.10000000000002px;font-size:10.5px;color:#000">Diagram Overview</div>
<div class="t" style="left:28.5px;top:250.10000000000002px;font-size:10.5px;color:#000">ETL Table</div>
<div class="t" style="left:28.5px;top:274.1px;font-size:10.5px;color:#000">Generic Connector</div>
<div class="t" style="left:28.5px;top:298.1px;font-size:10.5px;color:#000">User Story</div>
<div class="t" style="left:28.5px;top:322.1px;font-size:10.5px;color:#000">Image</div>
<div class="t" style="left:28.5px;top:346.1px;font-size:10.5px;color:#000">Screen Capture</div>
<div class="t" style="left:28.5px;top:370.1px;font-size:10.5px;color:#000">Callout</div>
<div class="t" style="left:28.5px;top:394.1px;font-size:10.5px;color:#000">Rectangle</div>
<div class="t" style="left:28.5px;top:418.1px;font-size:10.5px;color:#000">Oval</div>
<div class="t" style="left:28.5px;top:442.1px;font-size:10.5px;color:#000">Polygon</div>
<div class="t" style="left:28.5px;top:466.1px;font-size:10.5px;color:#000">Line</div>
<div class="t" style="left:28.5px;top:490.1px;font-size:10.5px;color:#000">Text Box</div>
<div class="t" style="left:28.5px;top:514.1px;font-size:10.5px;color:#000">Diagram Info</div>
<div class="t" style="left:28.5px;top:538.1px;font-size:10.5px;color:#000">Business Rule</div>
<div class="t" style="left:28.5px;top:562.1px;font-size:10.5px;color:#000">Business Rule Link</div>
</div>
<svg class="a" style="left:241px;top:128.1px" width="18" height="16"><rect x="0.5" y="0.5" width="16" height="14" rx="3" fill="#f5e9a0" stroke="#888"/><rect x="1" y="5" width="15" height="4" fill="#fff"/><path d="M1 5 h15 M1 9 h15 M6 1 v4" stroke="#888" stroke-width=".7"/></svg>
<svg class="a" style="left:241px;top:154.1px" width="18" height="12"><rect x="0.5" y="0.5" width="16" height="10" fill="#f7eeb0" stroke="#666"/><path d="M3 5.5 h11" stroke="#333"/></svg>
<svg class="a" style="left:242px;top:178.1px" width="18" height="12"><rect x="0.5" y="0.5" width="16" height="10" fill="#f7eeb0" stroke="#666" stroke-width=".8"/><rect x="0.5" y="0.5" width="5" height="10" fill="#eee" stroke="#666" stroke-width=".8"/><path d="M7 5.5 h10" stroke="#333" stroke-width="1.5"/><path d="M17 0.5 v10" stroke="#f0f0f0" stroke-width="1.5"/></svg>
<svg class="a" style="left:241px;top:202.6px" width="18" height="11"><path d="M0 5.5 h16 M12 2 l4 3.5 l-4 3.5" stroke="#222" fill="none"/></svg>
<svg class="a" style="left:241px;top:226.6px" width="18" height="11"><path d="M1 5.5 h16 M13 2 l4 3.5 l-4 3.5 M5 2 l-4 3.5 l4 3.5" stroke="#222" fill="none"/></svg>
<svg class="a" style="left:241px;top:247.10000000000002px" width="18" height="18"><circle cx="8.7" cy="8.7" r="8" fill="#7dc84a"/><circle cx="8.7" cy="8.7" r="5.5" fill="#888"/><rect x="5.5" y="6.5" width="6.5" height="4.5" fill="#f3ec7a"/></svg>
<svg class="a" style="left:241px;top:271.1px" width="18" height="18"><circle cx="8.7" cy="8.7" r="8" fill="#c42a2a"/><circle cx="8.7" cy="8.7" r="5.5" fill="#888"/><rect x="5.5" y="6.5" width="6.5" height="4.5" fill="#f3ec7a"/></svg>
<svg class="a" style="left:241px;top:304.6px" width="19" height="17"><path d="M0.5 0.5 h5 v3 h12 v12 h-17z" fill="url(#pkg)" stroke="#2a5f9e"/><path d="M3 7 h11" stroke="#1a3a60" stroke-width="1.3"/></svg>
<svg class="a" style="left:241px;top:330.1px" width="18" height="14"><rect x="0.5" y="0.5" width="16" height="12" fill="#dbe9f8" stroke="#3a86d8"/><rect x="7" y="3" width="6" height="4" fill="none" stroke="#7aa"/><rect x="3" y="7" width="6" height="4" fill="none" stroke="#7aa"/></svg>
<svg class="a" style="left:241px;top:354.6px" width="18" height="15"><rect x="0.5" y="0.5" width="16" height="13" fill="#f4f4f4" stroke="#999"/><rect x="0.5" y="0.5" width="16" height="3" fill="#8bc48a"/><path d="M1 7 h15 M1 10.5 h15 M6 3 v11" stroke="#bbb"/><path d="M10 13 l6 -5" stroke="#c33" stroke-width="1.3"/></svg>
<svg class="a" style="left:241px;top:383.6px" width="18" height="4"><path d="M0 1.5 h17" stroke="#777" stroke-width="1.5"/></svg>
<svg class="a" style="left:241px;top:403.6px" width="18" height="13"><rect x="0.5" y="0.5" width="16" height="10.5" fill="url(#us)" stroke="#2b8fc0"/><rect x="0.5" y="0.5" width="16" height="1.5" fill="#1a7a9a"/></svg>
<svg class="a" style="left:241px;top:425.6px" width="18" height="17"><rect x="0.5" y="0.5" width="15" height="15" fill="#d9e6f2" stroke="#9ab"/><path d="M2 14 q5 -8 12 0z" fill="#4a9a3a"/><circle cx="10" cy="7" r="2.5" fill="#e9c43a"/></svg>
<svg class="a" style="left:241px;top:451.6px" width="18" height="13"><rect x="0.5" y="2.5" width="16" height="10" rx="2" fill="#5e6f82"/><rect x="4" y="0.5" width="6" height="3" fill="#5e6f82"/><circle cx="8.5" cy="7.5" r="3.5" fill="#cfd8e0"/><circle cx="8.5" cy="7.5" r="2" fill="#5e6f82"/></svg>
<svg class="a" style="left:241px;top:474.6px" width="18" height="15"><path d="M2.5 0.5 h12 q2 0 2 2 v6 q0 2 -2 2 h-9 l-4 2.5 l2 -2.5 q-1 0 -1 -2 v-6 q0 -2 2 -2z" fill="url(#pur)" stroke="#c890dc"/><path d="M3 4 h10 M3 6.5 h7" stroke="#b070c8" stroke-width=".8"/></svg>
<svg class="a" style="left:241px;top:499.6px" width="18" height="13"><rect x="0.5" y="0.5" width="16" height="10.5" rx="2" fill="url(#pur)" stroke="#c890dc"/></svg>
<svg class="a" style="left:241px;top:524.1px" width="18" height="12"><ellipse cx="8.5" cy="5.5" rx="8" ry="5" fill="url(#pur)" stroke="#c890dc"/></svg>
<svg class="a" style="left:241px;top:545.1px" width="19" height="17"><path d="M9 0.5 L18 15.5 H0.5 Z" fill="url(#pur)" stroke="#c890dc"/></svg>
<svg class="a" style="left:241px;top:569.6px" width="18" height="17"><path d="M13 1 L3 8 L14 8 L3 15" stroke="#666" fill="none" stroke-width="1.1"/></svg>
<svg class="a" style="left:241px;top:595.6px" width="18" height="13"><path d="M0.5 1.5 h16 M0.5 4.5 h16 M0.5 7.5 h16 M0.5 10.5 h16" stroke="#8a8a8a"/></svg>
<svg class="a" style="left:241px;top:617.6px" width="19" height="18"><rect x="0.5" y="0.5" width="14" height="14" fill="#f4f4f4" stroke="#3a6aa8"/><rect x="0.5" y="0.5" width="14" height="3" fill="#5b8fe0"/><circle cx="13" cy="12.5" r="4.5" fill="#7a2ab8"/><path d="M13 10.5 v5" stroke="#fff" stroke-width="1.3"/></svg>
<svg class="a" style="left:241px;top:643.1px" width="18" height="14"><path d="M0.5 0.5 h16 v12 h-13 l-3 -3z" fill="#a8c8ec" stroke="#556"/><path d="M6 9 h8 M8 4 v5 M8 4 h3" stroke="#223"/></svg>
<svg class="a" style="left:367px;top:315px" width="9" height="9"><path d="M8 0 V8 H0Z" fill="#1a1a1a"/></svg>
<svg class="a" style="left:367px;top:651px" width="9" height="9"><path d="M8 0 V8 H0Z" fill="#1a1a1a"/></svg>
<svg class="a" style="left:301px;top:676px" width="11" height="9"><path d="M1 0.5 H10 L5.5 8 Z" fill="#555"/></svg>
<div class="a" style="left:378px;top:84px;width:886px;height:602px;background:#fff;border:1px solid #7f858b"></div>
<div class="a" style="left:1250px;top:371px;width:12px;height:27px;background:#e4e4e4;border:1px solid #d6d6d6"></div>
<div class="a" style="left:1253px;top:374px;width:2px;height:22px;background:#777"></div>
<div class="a" style="left:1256px;top:374px;width:2px;height:22px;background:#777"></div>
<div class="a" style="left:1258.5px;top:374px;width:1.5px;height:22px;background:#777"></div>
<div class="a" style="left:1px;top:686px;width:1264px;height:26px;background:linear-gradient(#fafafa,#eeeeee);border-radius:0 0 7px 7px"></div>
<svg class="a" style="left:1194px;top:689px" width="54" height="20">
<rect x="1.5" y="5.5" width="17" height="11" fill="#eef3f8" stroke="#4a90e2"/>
<path d="M1.5 5.5 l8.5 6 l8.5 -6" fill="none" stroke="#4a90e2"/>
<path d="M36.5 1.5 h9 l4 4 v12 h-13z" fill="#eef3f8" stroke="#4a90e2"/>
<path d="M38 8 h9 M38 11 h9 M38 14 h9" stroke="#bbb"/>
<path d="M39 17 l9 -13" stroke="#2a7ab0" stroke-width="1.5"/>
</svg>
<svg class="a" style="left:0;top:0;will-change:transform" width="1266" height="713" viewBox="0 0 1266 713">
<defs><clipPath id="cv"><rect x="379" y="85" width="884" height="600"/></clipPath></defs><g clip-path="url(#cv)">
<path d="M518.5 216.5 L518.5 158.5 L1073.5 158.5 L1073.5 216.5" fill="none" stroke="#000" stroke-width="1.15"/>
<path d="M1066.00 201.50 L1073.50 216.50 L1081.00 201.50" fill="none" stroke="#000" stroke-width="1.15"/>
<path d="M725.5 232.5 L564.5 232.5" fill="none" stroke="#000" stroke-width="1.15"/>
<path d="M579.50 225.00 L564.50 232.50 L579.50 240.00" fill="none" stroke="#000" stroke-width="1.15"/>
<path d="M564.5 268.5 L627.5 268.5 L627.5 264.5 L726.5 264.5" fill="none" stroke="#000" stroke-width="1.15"/>
<path d="M711.50 272.00 L726.50 264.50 L711.50 257.00" fill="none" stroke="#000" stroke-width="1.15"/>
<path d="M830.5 232.5 L992.5 232.5" fill="none" stroke="#000" stroke-width="1.15"/>
<path d="M977.50 240.00 L992.50 232.50 L977.50 225.00" fill="none" stroke="#000" stroke-width="1.15"/>
<path d="M992.5 257.5 L921.5 257.5 L921.5 282.5 L823.5 282.5" fill="none" stroke="#000" stroke-width="1.15"/>
<path d="M838.50 275.00 L823.50 282.50 L838.50 290.00" fill="none" stroke="#000" stroke-width="1.15"/>
<path d="M505.5 370.5 L505.5 326.5 L611.5 326.5 L628.5 284.5 L726.5 284.5" fill="none" stroke="#000" stroke-width="1.15"/>
<path d="M711.50 292.00 L726.50 284.50 L711.50 277.00" fill="none" stroke="#000" stroke-width="1.15"/>
<path d="M563.5 378.5 L640.5 378.5 L665.5 326.5 L778.5 326.5 L778.5 284.5" fill="none" stroke="#000" stroke-width="1.15"/>
<path d="M786.00 299.50 L778.50 284.50 L771.00 299.50" fill="none" stroke="#000" stroke-width="1.15"/>
<path d="M563.5 395.5 L698.5 395.5" fill="none" stroke="#000" stroke-width="1.15"/>
<path d="M683.50 403.00 L698.50 395.50 L683.50 388.00" fill="none" stroke="#000" stroke-width="1.15"/>
<path d="M531.5 420.5 L531.5 463.5 L786.5 463.5 L786.5 431.5" fill="none" stroke="#000" stroke-width="1.15"/>
<path d="M794.00 446.50 L786.50 431.50 L779.00 446.50" fill="none" stroke="#000" stroke-width="1.15"/>
<path d="M874.5 387.5 L1023.5 387.5" fill="none" stroke="#000" stroke-width="1.15"/>
<path d="M1008.50 395.00 L1023.50 387.50 L1008.50 380.00" fill="none" stroke="#000" stroke-width="1.15"/>
<path d="M1023.5 409.5 L874.5 409.5" fill="none" stroke="#000" stroke-width="1.15"/>
<path d="M889.50 402.00 L874.50 409.50 L889.50 417.00" fill="none" stroke="#000" stroke-width="1.15"/>
<path d="M505.5 420.5 V527.5 Q505.5 529.5 508 529.5 H512" fill="none" stroke="#000" stroke-width="1.15"/>
<path d="M581.5 549.5 L628.5 561.5 L704.5 561.5" fill="none" stroke="#000" stroke-width="1.15"/>
<path d="M689.50 569.00 L704.50 561.50 L689.50 554.00" fill="none" stroke="#000" stroke-width="1.15"/>
<path d="M563.5 596.5 L707.5 596.5" fill="none" stroke="#000" stroke-width="1.15"/>
<path d="M692.50 604.00 L707.50 596.50 L692.50 589.00" fill="none" stroke="#000" stroke-width="1.15"/>
<path d="M864.5 571.5 L992.5 571.5" fill="none" stroke="#000" stroke-width="1.15"/>
<path d="M977.50 579.00 L992.50 571.50 L977.50 564.00" fill="none" stroke="#000" stroke-width="1.15"/>
<text x="760.1" y="152.6" font-size="13" letter-spacing="0.06" font-family="Liberation Sans" fill="#000">Payment Data</text>
<text x="590.2" y="218.9" font-size="13" letter-spacing="0.06" font-family="Liberation Sans" fill="#000">Payment Request</text>
<text x="584.3" y="253.8" font-size="13" letter-spacing="0.06" font-family="Liberation Sans" fill="#000">Payment Confirmation</text>
<text x="877.7" y="220.1" font-size="13" letter-spacing="0.06" font-family="Liberation Sans" fill="#000">Order Details</text>
<text x="910.7" y="304.2" font-size="13" letter-spacing="0.06" font-family="Liberation Sans" fill="#000">Order Data</text>
<text x="519.6" y="321.4" font-size="13" letter-spacing="0.06" font-family="Liberation Sans" fill="#000">Add to Cart</text>
<text x="687.8" y="318.5" font-size="13" letter-spacing="0.06" font-family="Liberation Sans" fill="#000">Place Order</text>
<text x="585.3" y="421.6" font-size="13" letter-spacing="0.06" font-family="Liberation Sans" fill="#000">Customer Profile</text>
<text x="607" y="460" font-size="13" letter-spacing="0.06" font-family="Liberation Sans" fill="#000">Update Account</text>
<text x="910.3" y="379.6" font-size="13" letter-spacing="0.06" font-family="Liberation Sans" fill="#000">Account Data</text>
<text x="904.4" y="430.6" font-size="13" letter-spacing="0.06" font-family="Liberation Sans" fill="#000">Customer Data</text>
<text x="515.6" y="546.4" font-size="13" letter-spacing="0.06" font-family="Liberation Sans" fill="#000">View Products</text>
<text x="614.7" y="625.5" font-size="13" letter-spacing="0.06" font-family="Liberation Sans" fill="#000">Update Catalog</text>
<text x="910.3" y="600.7" font-size="13" letter-spacing="0.06" font-family="Liberation Sans" fill="#000">Product Data</text>
<rect x="440.5" y="216.5" width="121.0" height="66.0" rx="13" ry="13" fill="#f5e99b" stroke="#000" stroke-width="1.15"/><rect x="441.1" y="240.5" width="119.8" height="18.0" fill="#fff"/><path d="M440.5 240.5 H561.5 M440.5 258.5 H561.5 M464.5 216.5 V240.5" stroke="#000" stroke-width="1.15"/><text x="445.5" y="256.09999999999997" font-size="13" letter-spacing="0.2" font-family="Liberation Sans" fill="#000">Process Payments</text><text x="442.3" y="226.3" font-size="12.5" font-family="Liberation Sans" fill="#000" stroke="#fff" stroke-width="1.8" stroke-linejoin="round" paint-order="stroke">a</text>
<rect x="725.5" y="216.5" width="103.0" height="66.0" rx="13" ry="13" fill="#f5e99b" stroke="#000" stroke-width="1.15"/><rect x="726.1" y="240.5" width="101.8" height="18.0" fill="#fff"/><path d="M725.5 240.5 H828.5 M725.5 258.5 H828.5 M749.5 216.5 V240.5" stroke="#000" stroke-width="1.15"/><text x="730.4" y="256.09999999999997" font-size="13" letter-spacing="0.2" font-family="Liberation Sans" fill="#000">Process Orders</text><text x="727.3" y="226.3" font-size="12.5" font-family="Liberation Sans" fill="#000" stroke="#fff" stroke-width="1.8" stroke-linejoin="round" paint-order="stroke">a</text>
<rect x="699.5" y="362.5" width="173.0" height="66.0" rx="13" ry="13" fill="#f5e99b" stroke="#000" stroke-width="1.15"/><rect x="700.1" y="386.5" width="171.8" height="18.0" fill="#fff"/><path d="M699.5 386.5 H872.5 M699.5 404.5 H872.5 M723.5 362.5 V386.5" stroke="#000" stroke-width="1.15"/><text x="705.3" y="402.2" font-size="13" letter-spacing="0.2" font-family="Liberation Sans" fill="#000">Handle Customer Accounts</text><text x="701.3" y="372.3" font-size="12.5" font-family="Liberation Sans" fill="#000" stroke="#fff" stroke-width="1.8" stroke-linejoin="round" paint-order="stroke">a</text>
<rect x="704.5" y="536.5" width="157.0" height="66.0" rx="13" ry="13" fill="#f5e99b" stroke="#000" stroke-width="1.15"/><rect x="705.1" y="560.5" width="155.8" height="18.0" fill="#fff"/><path d="M704.5 560.5 H861.5 M704.5 578.5 H861.5 M728.5 536.5 V560.5" stroke="#000" stroke-width="1.15"/><text x="709.3" y="575.6999999999999" font-size="13" letter-spacing="0.2" font-family="Liberation Sans" fill="#000">Manage Product Catalog</text><text x="706.3" y="546.3" font-size="12.5" font-family="Liberation Sans" fill="#000" stroke="#fff" stroke-width="1.8" stroke-linejoin="round" paint-order="stroke">a</text>
<rect x="448.5" y="370.5" width="113.0" height="48.0" fill="#f5e99b" stroke="#000" stroke-width="1.15"/><text x="476.5" y="399.8" font-size="13" letter-spacing="0.06" font-family="Liberation Sans" fill="#000">Customer</text><text x="450.3" y="380.3" font-size="12.5" font-family="Liberation Sans" fill="#000" stroke="#fff" stroke-width="1.8" stroke-linejoin="round" paint-order="stroke">a</text>
<rect x="448.5" y="571.5" width="113.0" height="48.0" fill="#f5e99b" stroke="#000" stroke-width="1.15"/><text x="484.2" y="600.7" font-size="13" letter-spacing="0.06" font-family="Liberation Sans" fill="#000">Admin</text><text x="450.3" y="581.3" font-size="12.5" font-family="Liberation Sans" fill="#000" stroke="#fff" stroke-width="1.8" stroke-linejoin="round" paint-order="stroke">a</text>
<rect x="992.5" y="216.5" width="37.0" height="48.0" fill="#cccccc"/><rect x="1029.5" y="216.5" width="111.0" height="48.0" fill="#f5e99b"/><path d="M1140.5 216.5 H992.5 V264.5 H1140.5 M1029.5 216.5 V264.5" fill="none" stroke="#000" stroke-width="1.15"/><text x="1038.4" y="245.9" font-size="13" letter-spacing="0.06" font-family="Liberation Sans" fill="#000">Order Database</text><text x="1006.5" y="231.1" font-size="12.5" font-family="Liberation Sans" fill="#000">D</text><text x="994.3" y="226.3" font-size="12.5" font-family="Liberation Sans" fill="#000" stroke="#fff" stroke-width="1.8" stroke-linejoin="round" paint-order="stroke">a</text>
<rect x="1023.5" y="370.5" width="37.0" height="48.0" fill="#cccccc"/><rect x="1060.5" y="370.5" width="132.0" height="48.0" fill="#f5e99b"/><path d="M1192.5 370.5 H1023.5 V418.5 H1192.5 M1060.5 370.5 V418.5" fill="none" stroke="#000" stroke-width="1.15"/><text x="1070.5" y="399.8" font-size="13" letter-spacing="0.06" font-family="Liberation Sans" fill="#000">Customer Database</text><text x="1037.5" y="385.1" font-size="12.5" font-family="Liberation Sans" fill="#000">D</text><text x="1025.3" y="380.3" font-size="12.5" font-family="Liberation Sans" fill="#000" stroke="#fff" stroke-width="1.8" stroke-linejoin="round" paint-order="stroke">a</text>
<rect x="992.5" y="546.5" width="37.0" height="48.0" fill="#cccccc"/><rect x="1029.5" y="546.5" width="123.0" height="48.0" fill="#f5e99b"/><path d="M1152.5 546.5 H992.5 V594.5 H1152.5 M1029.5 546.5 V594.5" fill="none" stroke="#000" stroke-width="1.15"/><text x="1039.7" y="575.5" font-size="13" letter-spacing="0.06" font-family="Liberation Sans" fill="#000">Product Database</text><text x="1006.5" y="561.1" font-size="12.5" font-family="Liberation Sans" fill="#000">D</text><text x="994.3" y="556.3" font-size="12.5" font-family="Liberation Sans" fill="#000" stroke="#fff" stroke-width="1.8" stroke-linejoin="round" paint-order="stroke">a</text>
</g></svg>
</body></html>
